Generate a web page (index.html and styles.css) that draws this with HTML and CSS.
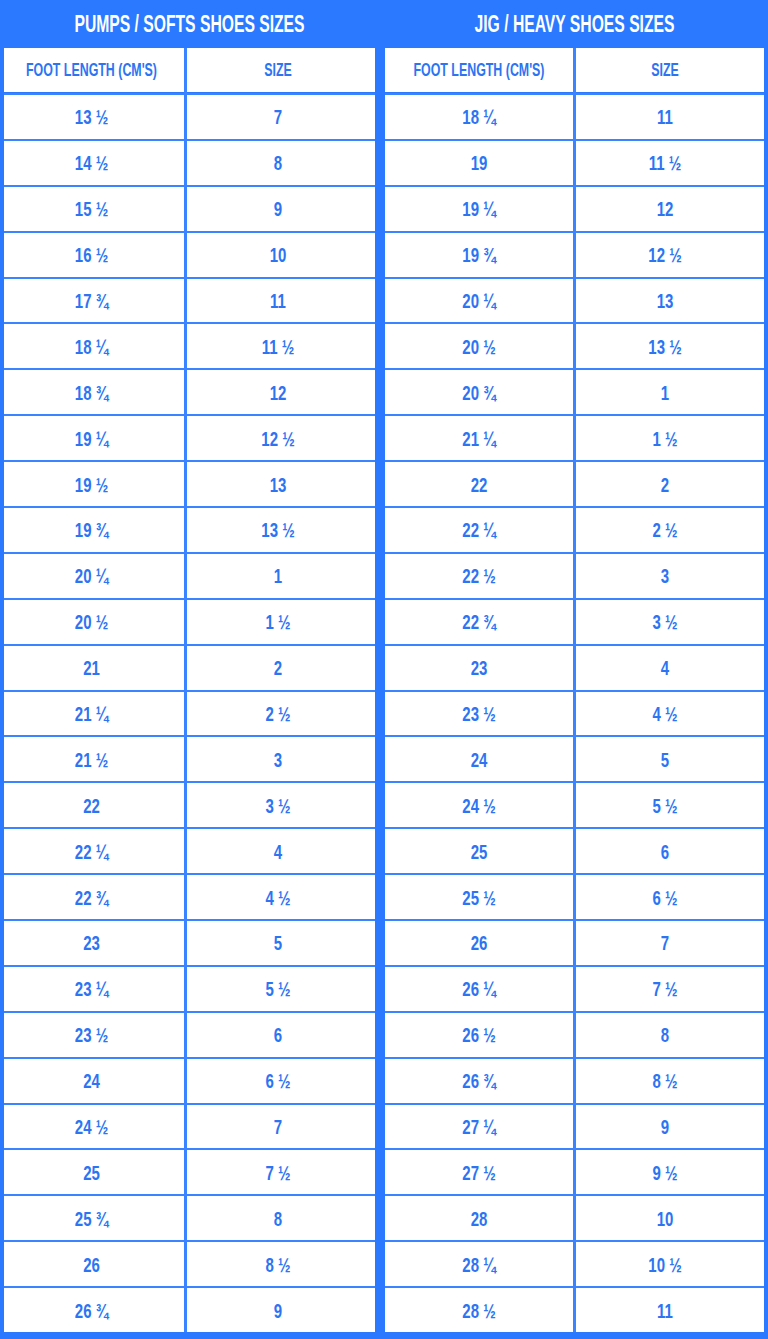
FILE: index.html
```html
<!DOCTYPE html>
<html>
<head>
<meta charset="utf-8">
<link rel="stylesheet" href="styles.css">
</head>
<body>
<div class="page">
  <section class="chart chart-left">
    <h2 class="title"><span>PUMPS / SOFTS SHOES SIZES</span></h2>
    <div class="grid">
      <div class="cell head"><span>FOOT LENGTH (CM'S)</span></div><div class="cell head"><span>SIZE</span></div>
      <div class="cell"><span>13 ½</span></div><div class="cell"><span>7</span></div>
      <div class="cell"><span>14 ½</span></div><div class="cell"><span>8</span></div>
      <div class="cell"><span>15 ½</span></div><div class="cell"><span>9</span></div>
      <div class="cell"><span>16 ½</span></div><div class="cell"><span>10</span></div>
      <div class="cell"><span>17 ¾</span></div><div class="cell"><span>11</span></div>
      <div class="cell"><span>18 ¼</span></div><div class="cell"><span>11 ½</span></div>
      <div class="cell"><span>18 ¾</span></div><div class="cell"><span>12</span></div>
      <div class="cell"><span>19 ¼</span></div><div class="cell"><span>12 ½</span></div>
      <div class="cell"><span>19 ½</span></div><div class="cell"><span>13</span></div>
      <div class="cell"><span>19 ¾</span></div><div class="cell"><span>13 ½</span></div>
      <div class="cell"><span>20 ¼</span></div><div class="cell"><span>1</span></div>
      <div class="cell"><span>20 ½</span></div><div class="cell"><span>1 ½</span></div>
      <div class="cell"><span>21</span></div><div class="cell"><span>2</span></div>
      <div class="cell"><span>21 ¼</span></div><div class="cell"><span>2 ½</span></div>
      <div class="cell"><span>21 ½</span></div><div class="cell"><span>3</span></div>
      <div class="cell"><span>22</span></div><div class="cell"><span>3 ½</span></div>
      <div class="cell"><span>22 ¼</span></div><div class="cell"><span>4</span></div>
      <div class="cell"><span>22 ¾</span></div><div class="cell"><span>4 ½</span></div>
      <div class="cell"><span>23</span></div><div class="cell"><span>5</span></div>
      <div class="cell"><span>23 ¼</span></div><div class="cell"><span>5 ½</span></div>
      <div class="cell"><span>23 ½</span></div><div class="cell"><span>6</span></div>
      <div class="cell"><span>24</span></div><div class="cell"><span>6 ½</span></div>
      <div class="cell"><span>24 ½</span></div><div class="cell"><span>7</span></div>
      <div class="cell"><span>25</span></div><div class="cell"><span>7 ½</span></div>
      <div class="cell"><span>25 ¾</span></div><div class="cell"><span>8</span></div>
      <div class="cell"><span>26</span></div><div class="cell"><span>8 ½</span></div>
      <div class="cell"><span>26 ¾</span></div><div class="cell"><span>9</span></div>
    </div>
  </section>
  <section class="chart chart-right">
    <h2 class="title"><span>JIG / HEAVY SHOES SIZES</span></h2>
    <div class="grid">
      <div class="cell head"><span>FOOT LENGTH (CM'S)</span></div><div class="cell head"><span>SIZE</span></div>
      <div class="cell"><span>18 ¼</span></div><div class="cell"><span>11</span></div>
      <div class="cell"><span>19</span></div><div class="cell"><span>11 ½</span></div>
      <div class="cell"><span>19 ¼</span></div><div class="cell"><span>12</span></div>
      <div class="cell"><span>19 ¾</span></div><div class="cell"><span>12 ½</span></div>
      <div class="cell"><span>20 ¼</span></div><div class="cell"><span>13</span></div>
      <div class="cell"><span>20 ½</span></div><div class="cell"><span>13 ½</span></div>
      <div class="cell"><span>20 ¾</span></div><div class="cell"><span>1</span></div>
      <div class="cell"><span>21 ¼</span></div><div class="cell"><span>1 ½</span></div>
      <div class="cell"><span>22</span></div><div class="cell"><span>2</span></div>
      <div class="cell"><span>22 ¼</span></div><div class="cell"><span>2 ½</span></div>
      <div class="cell"><span>22 ½</span></div><div class="cell"><span>3</span></div>
      <div class="cell"><span>22 ¾</span></div><div class="cell"><span>3 ½</span></div>
      <div class="cell"><span>23</span></div><div class="cell"><span>4</span></div>
      <div class="cell"><span>23 ½</span></div><div class="cell"><span>4 ½</span></div>
      <div class="cell"><span>24</span></div><div class="cell"><span>5</span></div>
      <div class="cell"><span>24 ½</span></div><div class="cell"><span>5 ½</span></div>
      <div class="cell"><span>25</span></div><div class="cell"><span>6</span></div>
      <div class="cell"><span>25 ½</span></div><div class="cell"><span>6 ½</span></div>
      <div class="cell"><span>26</span></div><div class="cell"><span>7</span></div>
      <div class="cell"><span>26 ¼</span></div><div class="cell"><span>7 ½</span></div>
      <div class="cell"><span>26 ½</span></div><div class="cell"><span>8</span></div>
      <div class="cell"><span>26 ¾</span></div><div class="cell"><span>8 ½</span></div>
      <div class="cell"><span>27 ¼</span></div><div class="cell"><span>9</span></div>
      <div class="cell"><span>27 ½</span></div><div class="cell"><span>9 ½</span></div>
      <div class="cell"><span>28</span></div><div class="cell"><span>10</span></div>
      <div class="cell"><span>28 ¼</span></div><div class="cell"><span>10 ½</span></div>
      <div class="cell"><span>28 ½</span></div><div class="cell"><span>11</span></div>
    </div>
  </section>
</div>
</body>
</html>
```

FILE: styles.css
```css
html, body {
  margin: 0;
  padding: 0;
  background: #2b79ff;
}
body {
  font-family: "Liberation Sans Narrow", "Liberation Sans", Arial, sans-serif;
  font-weight: bold;
}
.page {
  display: flex;
  gap: 10px;
  padding: 0 4px 7px 4px;
  width: 768px;
  height: 1339px;
  box-sizing: border-box;
}
.chart {
  display: flex;
  flex-direction: column;
}
.title {
  margin: 0;
  height: 48px;
  display: flex;
  align-items: center;
  justify-content: center;
  color: #ffffff;
  font-size: 15.7px;
  font-weight: bold;
}
.title span {
  display: inline-block;
  transform: scaleY(1.5);
}
.grid {
  display: grid;
  height: 1284px;
  grid-template-rows: 45px repeat(27, 1fr);
  row-gap: 2px;
  column-gap: 3px;
  background: #3b84ff;
}
.chart-left .grid {
  grid-template-columns: 180px 188px;
}
.chart-right .grid {
  grid-template-columns: 188px 188px;
}
.cell {
  background: #ffffff;
  display: flex;
  align-items: center;
  justify-content: center;
  color: #2d74f3;
  font-size: 15px;
}
.cell span {
  display: inline-block;
  transform: scaleY(1.3);
}
.chart-left .cell:nth-child(odd) span {
  margin-right: 5px;
}
.chart-left .cell:nth-child(even) span {
  margin-right: 6px;
}
.chart-right .cell:nth-child(even) span {
  margin-right: 10px;
}
.cell.head {
  border-bottom: 1px solid #2b79ff;
  font-size: 12.4px;
}
.cell.head span {
  transform: scaleY(1.5);
}
```
